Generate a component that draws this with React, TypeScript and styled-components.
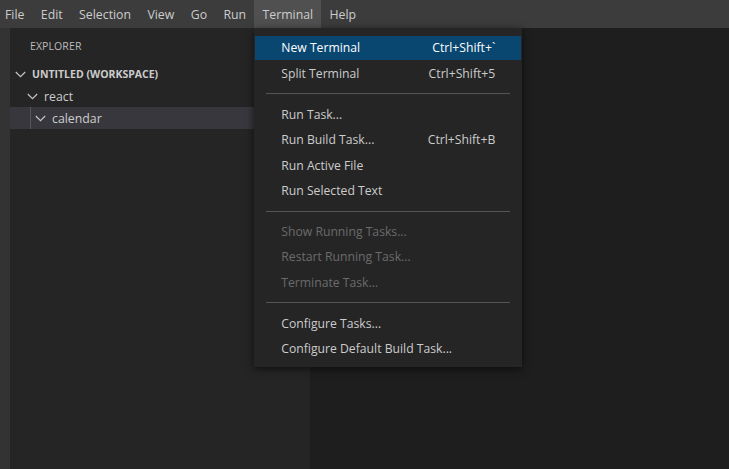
import React from "react";
import styled, { createGlobalStyle } from "styled-components";

const Global = createGlobalStyle`
  html, body { margin: 0; padding: 0; background: #1e1e1e; }
  body { font-family: "Open Sans", "Noto Sans", sans-serif; -webkit-font-smoothing: antialiased; }
  #root { height: 469px; }
`;

const Window = styled.div`
  width: 729px;
  height: 469px;
  display: flex;
  flex-direction: column;
  overflow: hidden;
  background: #1e1e1e;
`;

const MenuBar = styled.div`
  height: 28px;
  flex: none;
  display: flex;
  align-items: stretch;
  padding-left: 5px;
  background: #3c3c3c;
  position: relative;
  z-index: 10;
`;

const BarItem = styled.div<{ $open?: boolean }>`
  position: relative;
  display: flex;
  align-items: center;
  padding: 0 8.2px;
  font-size: 12.3px;
  color: #cccccc;
  background: ${(p) => (p.$open ? "#505050" : "transparent")};
  &:first-child { padding-left: 0; }
`;

const Body = styled.div`
  flex: 1;
  display: flex;
  min-height: 0;
`;

const ActivityBar = styled.div`
  width: 10px;
  flex: none;
  background: #333333;
`;

const SideBar = styled.div`
  width: 300px;
  flex: none;
  background: #252526;
  display: flex;
  flex-direction: column;
`;

const SideTitle = styled.div`
  height: 35px;
  display: flex;
  align-items: center;
  padding-left: 20px;
  font-size: 10.5px;
  color: #bbbbbb;
  letter-spacing: 0.1px;
`;

const TreeRow = styled.div<{ $indent: number; $selected?: boolean; $bold?: boolean }>`
  height: 22px;
  display: flex;
  align-items: center;
  position: relative;
  padding-left: ${(p) => p.$indent}px;
  background: ${(p) => (p.$selected ? "#37373d" : "transparent")};
  color: #cccccc;
  font-size: ${(p) => (p.$bold ? "10.5px" : "12.3px")};
  font-weight: ${(p) => (p.$bold ? 700 : 400)};
  gap: 6px;
`;

const IndentGuide = styled.span`
  position: absolute;
  left: 20px;
  top: 0;
  bottom: 0;
  width: 1px;
  background: #585858;
`;

const Chevron = () => (
  <svg width="11" height="7" viewBox="0 0 11 7" style={{ flex: "none" }}>
    <polyline points="0.8,1 5.5,5.7 10.2,1" fill="none" stroke="#c5c5c5" strokeWidth="1.2" />
  </svg>
);

const Editor = styled.div`
  flex: 1;
  background: #1e1e1e;
`;

const Menu = styled.div`
  position: absolute;
  top: 100%;
  left: 0;
  width: 268px;
  box-sizing: border-box;
  padding: 8.3px 1px 6.3px;
  background: #252526;
  box-shadow: 0 2px 8px rgba(0, 0, 0, 0.6);
  display: flex;
  flex-direction: column;
  gap: 2px;
`;

const MenuItem = styled.div<{ $active?: boolean; $disabled?: boolean }>`
  height: 23.4px;
  display: flex;
  align-items: center;
  justify-content: space-between;
  padding: 0 26px 0 26px;
  font-size: 12.2px;
  color: ${(p) => (p.$disabled ? "#6b6b6b" : p.$active ? "#ffffff" : "#cccccc")};
  background: ${(p) => (p.$active ? "#094771" : "transparent")};
`;

const Shortcut = styled.span`
  color: inherit;
`;

const Separator = styled.div`
  height: 13.6px;
  display: flex;
  align-items: center;
  padding: 0 11px;
  &::after {
    content: "";
    flex: 1;
    height: 1px;
    background: #555555;
  }
`;

type Entry = { label: string; key?: string; active?: boolean; disabled?: boolean } | "sep";

const entries: Entry[] = [
  { label: "New Terminal", key: "Ctrl+Shift+`", active: true },
  { label: "Split Terminal", key: "Ctrl+Shift+5" },
  "sep",
  { label: "Run Task..." },
  { label: "Run Build Task...", key: "Ctrl+Shift+B" },
  { label: "Run Active File" },
  { label: "Run Selected Text" },
  "sep",
  { label: "Show Running Tasks...", disabled: true },
  { label: "Restart Running Task...", disabled: true },
  { label: "Terminate Task...", disabled: true },
  "sep",
  { label: "Configure Tasks..." },
  { label: "Configure Default Build Task..." },
];

const menus = ["File", "Edit", "Selection", "View", "Go", "Run", "Terminal", "Help"];

export default function App() {
  return (
    <Window>
      <Global />
      <MenuBar>
        {menus.map((m) => (
          <BarItem key={m} $open={m === "Terminal"}>
            {m}
            {m === "Terminal" && (
              <Menu>
                {entries.map((e, i) =>
                  e === "sep" ? (
                    <Separator key={i} />
                  ) : (
                    <MenuItem key={i} $active={e.active} $disabled={e.disabled}>
                      <span>{e.label}</span>
                      {e.key && <Shortcut>{e.key}</Shortcut>}
                    </MenuItem>
                  )
                )}
              </Menu>
            )}
          </BarItem>
        ))}
      </MenuBar>
      <Body>
        <ActivityBar />
        <SideBar>
          <SideTitle>EXPLORER</SideTitle>
          <TreeRow $indent={5} $bold>
            <Chevron />
            UNTITLED (WORKSPACE)
          </TreeRow>
          <TreeRow $indent={17}>
            <Chevron />
            react
          </TreeRow>
          <TreeRow $indent={25} $selected>
            <IndentGuide />
            <Chevron />
            calendar
          </TreeRow>
        </SideBar>
        <Editor />
      </Body>
    </Window>
  );
}
